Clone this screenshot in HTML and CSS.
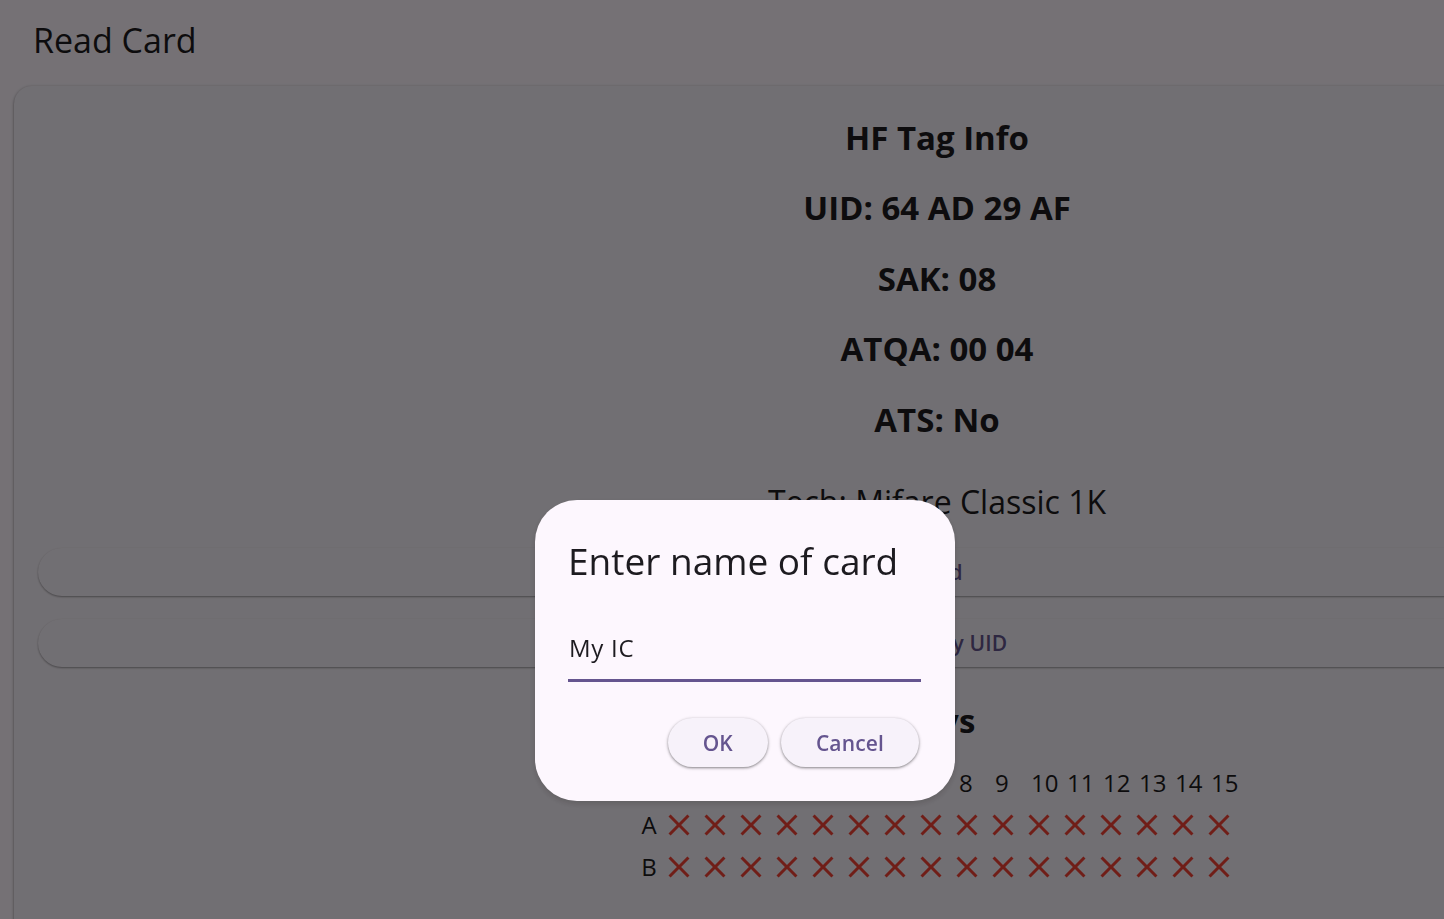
FILE: index.html
```html
<!DOCTYPE html>
<html lang="en">
<head>
<meta charset="utf-8">
<title>Read Card</title>
<link rel="stylesheet" href="styles.css">
</head>
<body>
<svg class="defs" width="0" height="0" aria-hidden="true">
  <defs>
    <symbol id="i-close" viewBox="0 0 24 24">
      <path d="M19 6.41L17.59 5 12 10.590 6.41 5 5 6.41 10.59 12 5 17.59 6.41 19 12 13.41 17.59 19 19 17.59 13.41 12z"/>
    </symbol>
  </defs>
</svg>

<div class="app">
  <header class="appbar">
    <h1 class="appbar-title">Read Card</h1>
  </header>

  <main class="card">
    <p class="info-line">HF Tag Info</p>
    <p class="info-line">UID: 64 AD 29 AF</p>
    <p class="info-line">SAK: 08</p>
    <p class="info-line">ATQA: 00 04</p>
    <p class="info-line">ATS: No</p>
    <p class="tech">Tech: Mifare Classic 1K</p>

    <button class="btn btn-first">Read</button>
    <button class="btn btn-second">Save only UID</button>

    <h2 class="info-line keys-title">Keys</h2>

    <div class="keys-grid">
      <span class="lbl"></span>
      <span class="num">0</span><span class="num">1</span><span class="num">2</span><span class="num">3</span>
      <span class="num">4</span><span class="num">5</span><span class="num">6</span><span class="num">7</span>
      <span class="num">8</span><span class="num">9</span><span class="num">10</span><span class="num">11</span>
      <span class="num">12</span><span class="num">13</span><span class="num">14</span><span class="num">15</span>

      <span class="lbl">A</span>
      <svg class="x"><use href="#i-close"/></svg><svg class="x"><use href="#i-close"/></svg>
      <svg class="x"><use href="#i-close"/></svg><svg class="x"><use href="#i-close"/></svg>
      <svg class="x"><use href="#i-close"/></svg><svg class="x"><use href="#i-close"/></svg>
      <svg class="x"><use href="#i-close"/></svg><svg class="x"><use href="#i-close"/></svg>
      <svg class="x"><use href="#i-close"/></svg><svg class="x"><use href="#i-close"/></svg>
      <svg class="x"><use href="#i-close"/></svg><svg class="x"><use href="#i-close"/></svg>
      <svg class="x"><use href="#i-close"/></svg><svg class="x"><use href="#i-close"/></svg>
      <svg class="x"><use href="#i-close"/></svg><svg class="x"><use href="#i-close"/></svg>

      <span class="lbl">B</span>
      <svg class="x"><use href="#i-close"/></svg><svg class="x"><use href="#i-close"/></svg>
      <svg class="x"><use href="#i-close"/></svg><svg class="x"><use href="#i-close"/></svg>
      <svg class="x"><use href="#i-close"/></svg><svg class="x"><use href="#i-close"/></svg>
      <svg class="x"><use href="#i-close"/></svg><svg class="x"><use href="#i-close"/></svg>
      <svg class="x"><use href="#i-close"/></svg><svg class="x"><use href="#i-close"/></svg>
      <svg class="x"><use href="#i-close"/></svg><svg class="x"><use href="#i-close"/></svg>
      <svg class="x"><use href="#i-close"/></svg><svg class="x"><use href="#i-close"/></svg>
      <svg class="x"><use href="#i-close"/></svg><svg class="x"><use href="#i-close"/></svg>
    </div>
  </main>
</div>

<div class="scrim"></div>

<div class="dialog" role="dialog" aria-labelledby="dlg-title">
  <h2 class="dialog-title" id="dlg-title">Enter name of card</h2>
  <div class="field">
    <input class="field-input" type="text" value="My IC">
  </div>
  <div class="dialog-actions">
    <button class="dlg-btn">OK</button>
    <button class="dlg-btn">Cancel</button>
  </div>
</div>
</body>
</html>
```

FILE: styles.css
```css
html, body {
  margin: 0;
  padding: 0;
  height: 100%;
  overflow: hidden;
}

body {
  background: #fef7ff;
  color: #1d1b20;
  font-family: "Open Sans", "Noto Sans", sans-serif;
}

.defs {
  position: absolute;
  width: 0;
  height: 0;
}

.app {
  width: 1874px;
}

.appbar {
  height: 86px;
  box-sizing: border-box;
  padding: 0 0 6px 33px;
  display: flex;
  align-items: center;
}

.appbar-title {
  margin: 0;
  font-size: 34px;
  font-weight: 400;
  line-height: 46px;
}

.card {
  margin-left: 14px;
  width: 1846px;
  min-height: 900px;
  box-sizing: border-box;
  padding: 16.5px 24px 0;
  background: #f7f2fa;
  border-radius: 18px;
  box-shadow: 0 1px 2px rgba(0, 0, 0, 0.3), 0 1px 3px 1px rgba(0, 0, 0, 0.15);
  display: flex;
  flex-direction: column;
  align-items: center;
}

.info-line {
  margin: 0;
  font-size: 33px;
  font-weight: 700;
  line-height: 70.5px;
}

.tech {
  margin: 22.5px 0 0;
  font-size: 32px;
  font-weight: 400;
  line-height: 48px;
}

.btn {
  align-self: stretch;
  height: 48px;
  border: 0;
  border-radius: 24px;
  background: #f7f2fa;
  color: #65558f;
  font-family: "Open Sans", "Noto Sans", sans-serif;
  font-size: 21px;
  font-weight: 600;
  letter-spacing: 0.15px;
  box-shadow: 0 1px 2px rgba(0, 0, 0, 0.3), 0 1px 2px rgba(0, 0, 0, 0.08);
}

.btn-first {
  margin-top: 22px;
}

.btn-second {
  margin-top: 23px;
}

.keys-title {
  margin-top: 19px;
}

.keys-grid {
  margin-top: 6px;
  display: grid;
  grid-template-columns: 24px repeat(16, 36px);
  grid-auto-rows: 42px;
  align-items: center;
  font-size: 24px;
  line-height: 32px;
}

.lbl {
  text-align: center;
}

.num {
  padding-left: 10px;
  white-space: nowrap;
}

.x {
  width: 36px;
  height: 36px;
  fill: #f44336;
}

.scrim {
  position: fixed;
  inset: 0;
  background: rgba(0, 0, 0, 0.54);
}

.dialog {
  position: fixed;
  left: 535px;
  top: 500px;
  width: 420px;
  box-sizing: border-box;
  padding: 36px 34px 34px 33px;
  background: #fdf7fe;
  border-radius: 42px;
  box-shadow: 0 3px 6px rgba(0, 0, 0, 0.15);
}

.dialog-title {
  margin: 0;
  font-size: 37px;
  font-weight: 400;
  line-height: 48px;
  padding-top: 1px;
  height: 47px;
}

.field {
  margin-top: 46px;
  padding-bottom: 13px;
  border-bottom: 3px solid #65558f;
}

.field-input {
  display: block;
  width: 100%;
  height: 36px;
  box-sizing: border-box;
  margin: 0;
  padding: 0 0 0 1px;
  border: 0;
  outline: none;
  background: transparent;
  color: #1d1b20;
  font-family: "Open Sans", "Noto Sans", sans-serif;
  font-size: 24px;
  line-height: 36px;
  letter-spacing: 0.75px;
}

.dialog-actions {
  margin-top: 36px;
  padding-right: 2px;
  display: flex;
  justify-content: flex-end;
  gap: 13px;
}

.dlg-btn {
  height: 49px;
  padding: 0 35px;
  border: 0;
  border-radius: 25px;
  background: #f7f2fa;
  color: #65558f;
  font-family: "Open Sans", "Noto Sans", sans-serif;
  font-size: 21px;
  font-weight: 600;
  letter-spacing: 0.15px;
  box-shadow: 0 1px 2px rgba(0, 0, 0, 0.3), 0 1px 3px 1px rgba(0, 0, 0, 0.15);
}
```
